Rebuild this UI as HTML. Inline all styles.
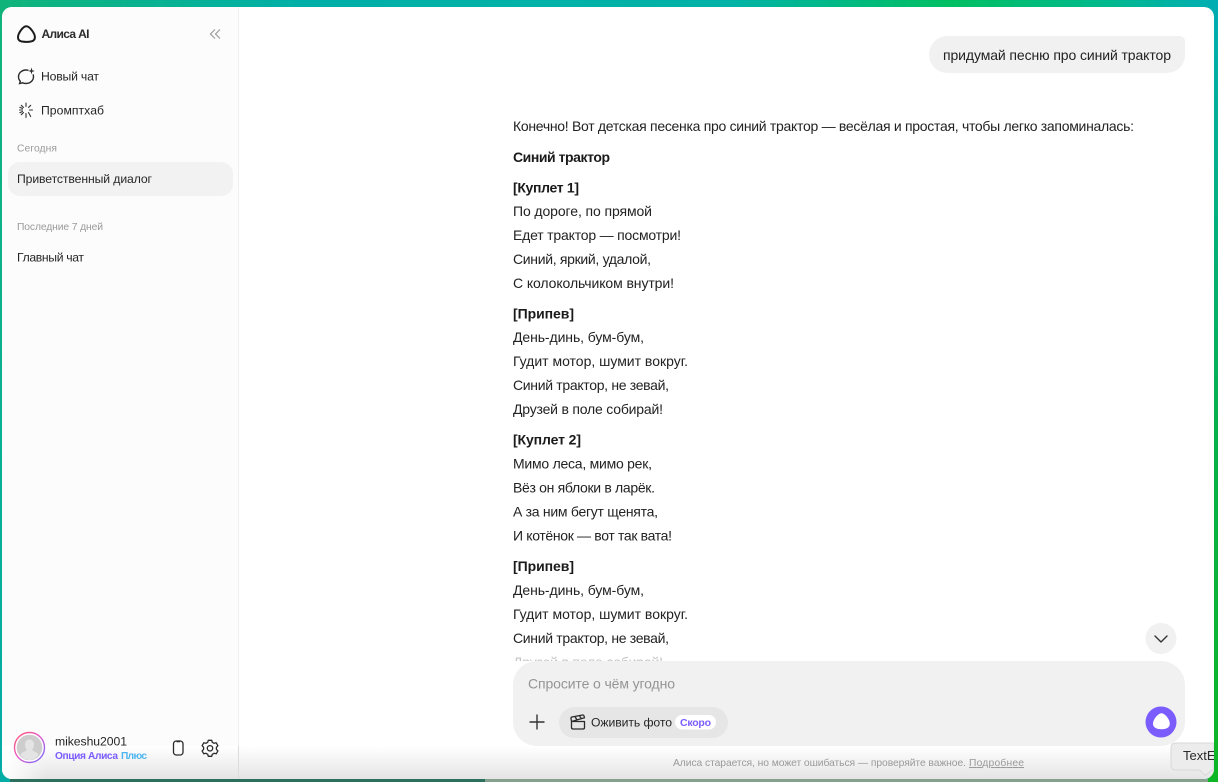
<!DOCTYPE html>
<html lang="ru"><head><meta charset="utf-8"><title>Алиса AI</title>
<style>
html,body{margin:0;padding:0;width:1218px;height:782px;overflow:hidden;background:#fff}
svg{display:block;position:absolute;left:0;top:0;filter:blur(.3px)}
text{font-family:"Liberation Sans","Noto Sans CJK SC",sans-serif;fill:#222;font-size:14px}
.s{font-size:12.2px;fill:#262626}
.g{font-size:10.3px;fill:#9a9a9a}
.b{font-weight:bold;fill:#1a1a1a}
</style></head><body>
<svg width="1218" height="782" viewBox="0 0 1218 782" xmlns="http://www.w3.org/2000/svg">
<defs>
<linearGradient id="top" x1="0" x2="1" y1="0" y2="0"><stop offset="0" stop-color="#10b47a"/><stop offset=".25" stop-color="#00b0a8"/><stop offset=".6" stop-color="#00b3a6"/><stop offset=".78" stop-color="#00bf62"/><stop offset=".9" stop-color="#00b98a"/><stop offset="1" stop-color="#00aeb4"/></linearGradient>
<linearGradient id="left" x1="0" x2="0" y1="0" y2="1"><stop offset="0" stop-color="#10b47a"/><stop offset="1" stop-color="#04aca6"/></linearGradient>
<linearGradient id="right" x1="0" x2="0" y1="0" y2="1"><stop offset="0" stop-color="#00aeb4"/><stop offset=".55" stop-color="#08b04a"/><stop offset="1" stop-color="#0cb624"/></linearGradient>
<linearGradient id="fade" x1="0" x2="0" y1="0" y2="1"><stop offset="0" stop-color="#fff"/><stop offset="1" stop-color="#e4e4e4"/></linearGradient>
<linearGradient id="fadeL" x1="0" x2="1" y1="0" y2="0"><stop offset="0" stop-color="#fff"/><stop offset="1" stop-color="#fff" stop-opacity="0"/></linearGradient>
<linearGradient id="ring" x1="0" x2="1" y1="0" y2="1"><stop offset="0" stop-color="#ff5a6e"/><stop offset=".5" stop-color="#e45ad0"/><stop offset="1" stop-color="#6a6cff"/></linearGradient>
<clipPath id="win"><rect x="2" y="7" width="1212" height="772" rx="10"/></clipPath>
<clipPath id="msg"><rect x="500" y="0" width="700" height="661"/></clipPath>
</defs>

<rect width="1218" height="782" fill="#00b0a0"/>
<rect x="0" y="0" width="10" height="782" fill="url(#left)"/>
<rect x="1208" y="0" width="10" height="782" fill="url(#right)"/>
<rect x="0" y="0" width="1218" height="7" fill="url(#top)"/>
<rect x="10" y="779" width="475" height="3" fill="#2c6f5c"/>
<rect x="485" y="779" width="723" height="3" fill="#86a08e"/>

<g clip-path="url(#win)">
<rect x="2" y="7" width="1212" height="772" fill="#fff"/>
<rect x="2" y="7" width="236" height="772" fill="#fcfcfc"/>
<rect x="238" y="7" width="1" height="772" fill="#f0f0f0"/>
<rect x="8" y="162" width="225" height="34" rx="12" fill="#f2f2f2"/>

<!-- logo -->
<path d="M26.300 26.200C29.700 26.200 34.900 33.500 34.900 37.200C34.900 41.300 30.800 41.900 26.300 41.900C21.800 41.900 18 41.300 18 37.200C18 33.500 22.900 26.200 26.300 26.200Z" fill="none" stroke="#1c1c1c" stroke-width="2"/>
<text x="41.500" y="38" style="font-size:12px;font-weight:bold;fill:#2a2a2a" textLength="48">Алиса AI</text>
<path d="M215 29.500L210.500 34L215 38.500M220 29.500L215.500 34L220 38.500" fill="none" stroke="#9c9c9c" stroke-width="1.200"/>

<!-- new chat -->
<path d="M28 70.200C27.300 70 26.700 70 26 70C21.700 70 18.500 73 18.500 76.800C18.500 78.600 19.200 80.200 20.300 81.300L19.600 83.500L22.600 82.800C23.600 83.300 24.700 83.500 26 83.500C30.300 83.500 33.500 80.500 33.500 76.800C33.500 76 33.400 75.400 33.200 74.800" fill="none" stroke="#2a2a2a" stroke-width="1.400" stroke-linecap="round"/>
<path d="M31.500 67.500L32.300 70.200L34.800 71L32.300 71.800L31.500 74.400L30.700 71.800L28.200 71L30.700 70.200Z" fill="#2a2a2a"/>
<text x="41" y="80.500" class="s" textLength="58">Новый чат</text>

<!-- prompt hub -->
<path d="M26 103V106.500M26 113.500V117.500M19.500 110H22.500M29.500 110H32.500M21.300 105.300L23.500 107.500M28.500 112.500L30.700 116.500M30.700 105.300L28.500 107.500M23.500 112.500L21.300 114.700M19.800 107.300L22.500 108.500M19.800 112.700L22.500 111.500" fill="none" stroke="#333" stroke-width="1.100" stroke-linecap="round"/>
<text x="41" y="114.500" class="s" textLength="63">Промптхаб</text>

<text x="17" y="151.500" class="g" textLength="40">Сегодня</text>
<text x="17" y="183" class="s" textLength="135">Приветственный диалог</text>
<text x="17" y="230" class="g" textLength="86">Последние 7 дней</text>
<text x="17" y="261.500" class="s" textLength="67">Главный чат</text>

<!-- user bubble -->
<path d="M948 36H1179Q1185 36 1185 42V55A18 18 0 0 1 1167 73H947.500A18.500 18.500 0 0 1 947.500 36Z" fill="#f1f1f1"/>
<text x="943" y="60" textLength="228">придумай песню про синий трактор</text>

<!-- message -->
<g clip-path="url(#msg)">
<text x="513" y="131" textLength="621">Конечно! Вот детская песенка про синий трактор — весёлая и простая, чтобы легко запоминалась:</text>
<text x="513" y="162" class="b" textLength="97">Синий трактор</text>
<text x="513" y="192.500" class="b" textLength="66">[Куплет 1]</text>
<text x="513" y="216" textLength="139">По дороге, по прямой</text>
<text x="513" y="240" textLength="168">Едет трактор — посмотри!</text>
<text x="513" y="264" textLength="138">Синий, яркий, удалой,</text>
<text x="513" y="288" textLength="161">С колокольчиком внутри!</text>
<text x="513" y="318.500" class="b" textLength="61">[Припев]</text>
<text x="513" y="342" textLength="131">День-динь, бум-бум,</text>
<text x="513" y="366" textLength="175">Гудит мотор, шумит вокруг.</text>
<text x="513" y="390" textLength="156">Синий трактор, не зевай,</text>
<text x="513" y="414" textLength="150">Друзей в поле собирай!</text>
<text x="513" y="444.500" class="b" textLength="68">[Куплет 2]</text>
<text x="513" y="468.500" textLength="139">Мимо леса, мимо рек,</text>
<text x="513" y="492.500" textLength="142">Вёз он яблоки в ларёк.</text>
<text x="513" y="516.500" textLength="145">А за ним бегут щенята,</text>
<text x="513" y="540.500" textLength="159">И котёнок — вот так вата!</text>
<text x="513" y="571" class="b" textLength="61">[Припев]</text>
<text x="513" y="595" textLength="131">День-динь, бум-бум,</text>
<text x="513" y="619" textLength="175">Гудит мотор, шумит вокруг.</text>
<text x="513" y="643" textLength="156">Синий трактор, не зевай,</text>
<text x="513" y="667" textLength="150" style="fill:#c4c4c4">Друзей в поле собирай!</text>
</g>

<!-- scroll button -->
<circle cx="1161" cy="638.500" r="15.500" fill="#f1f1f1"/>
<path d="M1155 636L1161 642L1167 636" fill="none" stroke="#333" stroke-width="1.400" stroke-linecap="round" stroke-linejoin="round"/>

<!-- bottom fade -->
<rect x="2" y="746" width="1212" height="33" fill="url(#fade)"/>
<rect x="2" y="746" width="45" height="33" fill="url(#fadeL)"/>
<rect x="238" y="746" width="1" height="33" fill="#dcdcdc"/>

<!-- input -->
<rect x="513" y="661" width="672" height="85" rx="24" fill="#f1f1f1"/>
<text x="528" y="688.500" textLength="147" style="fill:#959595">Спросите о чём угодно</text>
<path d="M537 714.500V729.500M529.500 722H544.500" stroke="#333" stroke-width="1.400" fill="none"/>
<rect x="559" y="707" width="169" height="31" rx="15.500" fill="#e6e6e6"/>
<path d="M571.500 721.500H584.500V727.500Q584.500 729 583 729H573Q571.500 729 571.500 727.500Z M571.500 721.500L571 718.500Q570.800 717.300 572 717L582.500 715Q583.700 714.800 584 716L584.500 717.800L571.500 721.500M575 716.500L577 720M579.500 715.700L581.500 719" fill="none" stroke="#2a2a2a" stroke-width="1.300" stroke-linejoin="round"/>
<text x="591" y="726.500" class="s" textLength="81">Оживить фото</text>
<rect x="675" y="715" width="41" height="14.500" rx="7.250" fill="#fff"/>
<text x="680" y="726" textLength="31" style="font-size:10.500px;fill:#7a5cff;font-weight:bold">Скоро</text>
<circle cx="1161" cy="722" r="15.500" fill="#7b5cff"/>
<path d="M1161.500 713.300C1165 713.300 1169.800 719.500 1169.800 723.800C1169.800 728 1165.500 729.300 1161.500 729.300C1157.500 729.300 1153 728 1153 723.800C1153 719.500 1158 713.300 1161.500 713.300Z" fill="#fff"/>

<!-- footer note -->
<text x="673" y="766" class="g" textLength="293">Алиса старается, но может ошибаться — проверяйте важное.</text>
<text x="969" y="766" class="g" textLength="55" text-decoration="underline">Подробнее</text>

<!-- user row -->
<circle cx="29.500" cy="747.500" r="15" fill="#fff" stroke="url(#ring)" stroke-width="1.400"/>
<circle cx="29.500" cy="747.500" r="12.800" fill="#cdcdcd"/>
<path d="M29.500 739.500C32.500 739.500 34 742 34 744.500C34 747 32.800 749 32 750C33.500 751.500 37 752 38.500 754.500C36.500 758 33 760 29.500 760C26 760 22.500 758 20.500 754.500C22 752 25.500 751.500 27 750C26.200 749 25 747 25 744.500C25 742 26.500 739.500 29.500 739.500Z" fill="#e4e4e4"/>
<text x="55" y="745.500" class="s" textLength="72">mikeshu2001</text>
<text x="55" y="759" textLength="63" style="font-size:10.200px;font-weight:bold;fill:#7b5cff">Опция Алиса</text>
<text x="121" y="759" textLength="26" style="font-size:10.200px;font-weight:bold;fill:#4db5f0">Плюс</text>
<rect x="173.500" y="741" width="9.500" height="14" rx="2.800" fill="none" stroke="#2a2a2a" stroke-width="1.300"/>
<path d="M176.500 741.500H180" stroke="#2a2a2a" stroke-width="1.600"/>
<path d="M208.300 740.300H211.700L212.300 742.300L214.100 743.300L216.200 742.800L217.900 745.700L216.400 747.300V749.300L217.900 750.900L216.200 753.800L214.100 753.300L212.300 754.300L211.700 756.300H208.300L207.700 754.300L205.900 753.300L203.800 753.800L202.100 750.900L203.600 749.300V747.300L202.100 745.700L203.800 742.800L205.900 743.300L207.700 742.300Z" fill="none" stroke="#2a2a2a" stroke-width="1.300" stroke-linejoin="round"/>
<circle cx="210" cy="748.300" r="2.700" fill="none" stroke="#2a2a2a" stroke-width="1.300"/>

<!-- tooltip -->
<path d="M1171 748Q1171 743 1176 743H1214V770H1212L1205 775.500L1200 770H1176Q1171 770 1171 765Z" fill="#ececec" stroke="#d8d8d8" stroke-width="1"/>
<text x="1183" y="760" style="font-size:13px;fill:#2a2a2a">TextE</text>
</g>
</svg>
</body></html>
